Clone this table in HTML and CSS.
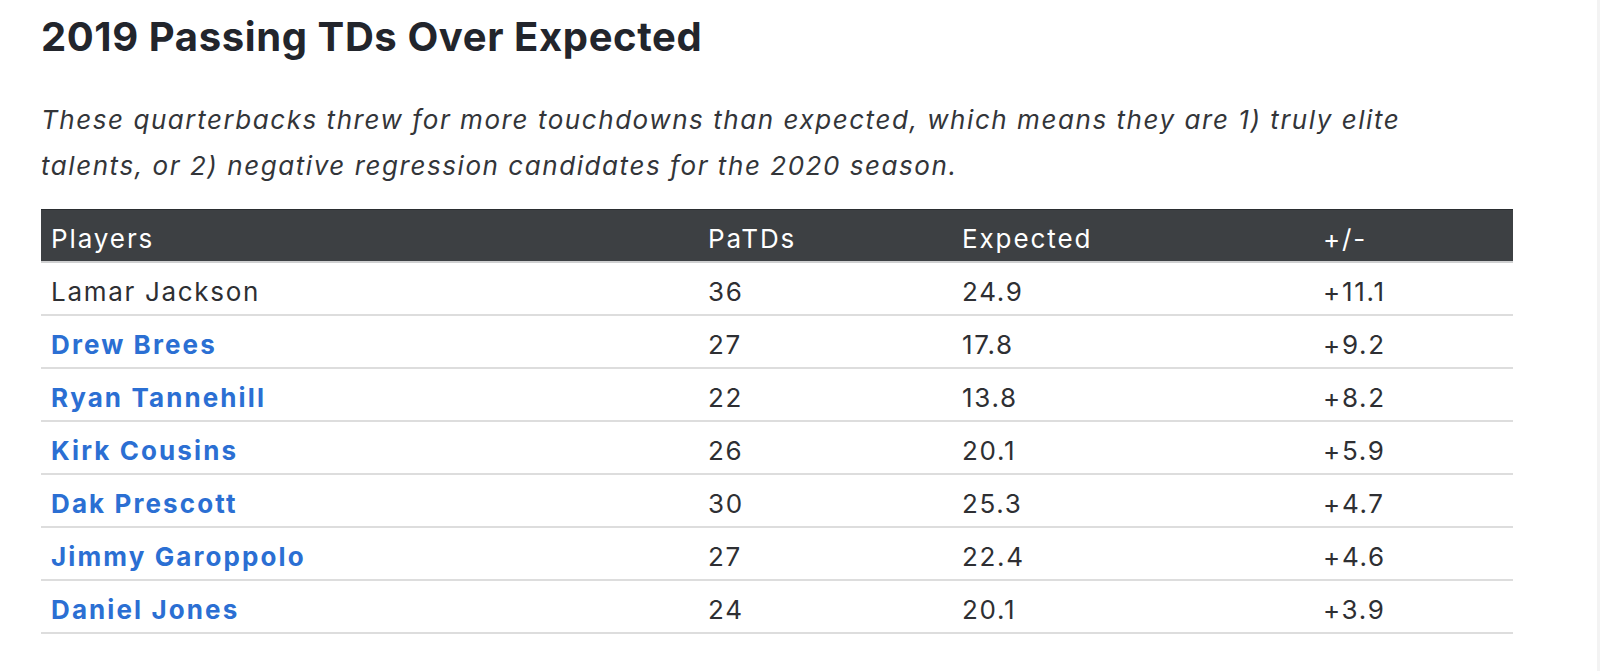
FILE: index.html
```html
<!DOCTYPE html>
<html lang="en">
<head>
<meta charset="utf-8">
<title>2019 Passing TDs Over Expected</title>
<link rel="stylesheet" href="styles.css">
</head>
<body>
<main class="page">
  <h1 class="title">2019 Passing TDs Over Expected</h1>
  <p class="intro">These quarterbacks threw for more touchdowns than expected, which means they are 1) truly elite talents, or 2) negative regression candidates for the 2020 season.</p>
  <table class="stats">
    <colgroup>
      <col class="c-player">
      <col class="c-patd">
      <col class="c-exp">
      <col class="c-diff">
    </colgroup>
    <thead>
      <tr><th>Players</th><th>PaTDs</th><th>Expected</th><th>+/-</th></tr>
    </thead>
    <tbody>
      <tr><td>Lamar Jackson</td><td>36</td><td>24.9</td><td>+11.1</td></tr>
      <tr><td><a class="player" href="#">Drew Brees</a></td><td>27</td><td>17.8</td><td>+9.2</td></tr>
      <tr><td><a class="player" href="#">Ryan Tannehill</a></td><td>22</td><td>13.8</td><td>+8.2</td></tr>
      <tr><td><a class="player" href="#">Kirk Cousins</a></td><td>26</td><td>20.1</td><td>+5.9</td></tr>
      <tr><td><a class="player" href="#">Dak Prescott</a></td><td>30</td><td>25.3</td><td>+4.7</td></tr>
      <tr><td><a class="player" href="#">Jimmy Garoppolo</a></td><td>27</td><td>22.4</td><td>+4.6</td></tr>
      <tr><td><a class="player" href="#">Daniel Jones</a></td><td>24</td><td>20.1</td><td>+3.9</td></tr>
    </tbody>
  </table>
</main>
</body>
</html>
```

FILE: styles.css
```css
html, body {
  margin: 0;
  padding: 0;
  background: #ffffff;
}

body {
  font-family: "Inter", "Lato", "Liberation Sans", sans-serif;
  color: #2e2f33;
  min-height: 100vh;
  border-right: 3px solid #f3f3f3;
  box-sizing: border-box;
}

.page {
  padding: 13px 0 0 41px;
  width: 1472px;
}

.title {
  margin: 0;
  font-size: 40px;
  line-height: 48px;
  font-weight: 700;
  letter-spacing: 0.6px;
  color: #22252c;
}

.intro {
  margin: 36px 0 0;
  max-width: 1410px;
  font-size: 26px;
  line-height: 46px;
  font-style: italic;
  letter-spacing: 1.55px;
  color: #333539;
}

.stats {
  margin-top: 20px;
  width: 1472px;
  border-collapse: collapse;
  table-layout: fixed;
  font-size: 26px;
  letter-spacing: 1.7px;
}

.c-player { width: 657px; }
.c-patd { width: 254px; }
.c-exp { width: 361px; }
.c-diff { width: 200px; }

.stats th,
.stats td {
  text-align: left;
  padding: 6px 0 0 10px;
  line-height: 45px;
  white-space: nowrap;
}

.stats thead tr {
  background: #3d4043;
  border-top: 1px solid #2b2e31;
  border-bottom: 2px solid #cfd0d1;
}

.stats th {
  font-weight: 400;
  color: #ffffff;
  letter-spacing: 1.9px;
}

.stats tbody tr {
  border-bottom: 2px solid #dddddd;
}

.stats td {
  color: #2e2f33;
}

.player {
  color: #2b6fd3;
  font-weight: 700;
  letter-spacing: 2.1px;
  text-decoration: none;
}
```
